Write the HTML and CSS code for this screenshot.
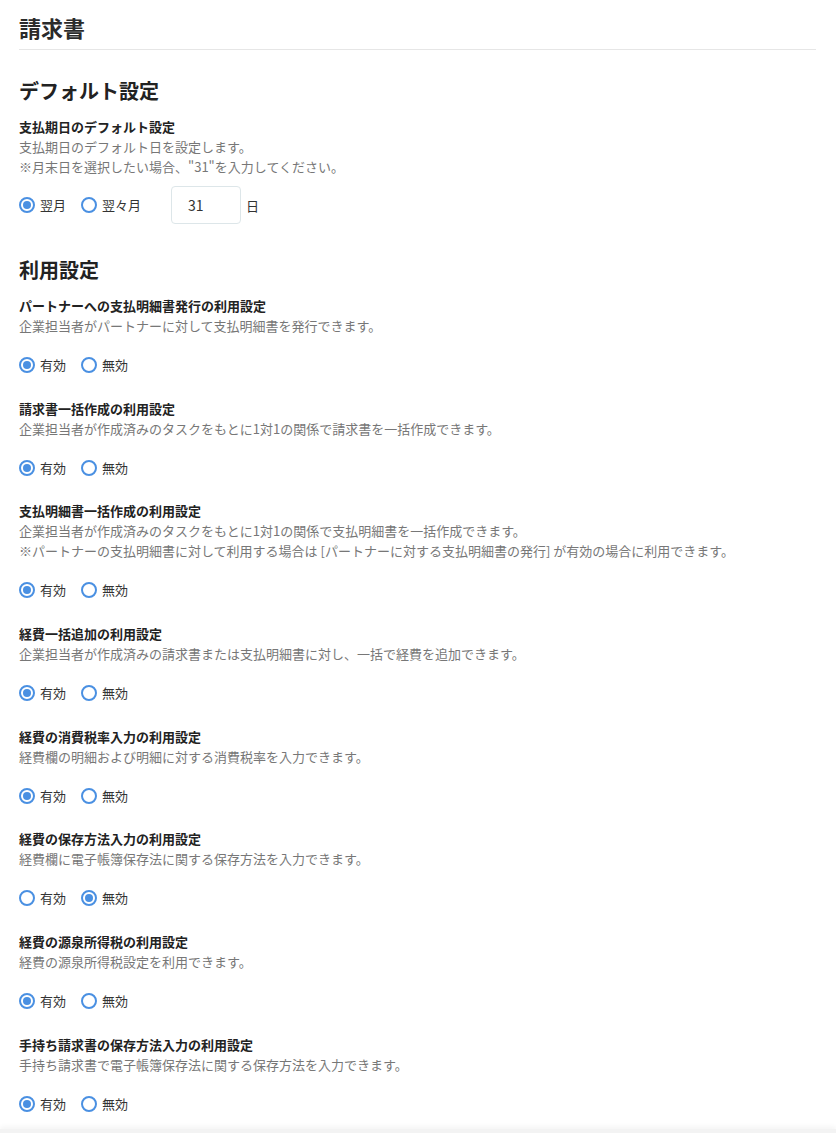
FILE: index.html
```html
<!DOCTYPE html>
<html lang="ja">
<head>
    <meta charset="UTF-8">
    <meta name="viewport" content="width=device-width, initial-scale=1.0">
    <title>請求書</title>
    <link rel="stylesheet" href="styles.css">
</head>
<body>
    <div class="page">
        <h1 class="page-title">請求書</h1>

        <section class="section">
            <h2 class="section-title">デフォルト設定</h2>
            <div class="setting">
                <div class="setting-title">支払期日のデフォルト設定</div>
                <p class="setting-desc">支払期日のデフォルト日を設定します。<br>※月末日を選択したい場合、"31"を入力してください。</p>
                <div class="radio-row radio-row-field">
                    <label class="radio"><span class="radio-mark checked"></span>翌月</label>
                    <label class="radio"><span class="radio-mark"></span>翌々月</label>
                    <div class="day-field">
                        <input class="day-input" type="text" value="31">
                        <span class="day-unit">日</span>
                    </div>
                </div>
            </div>
        </section>

        <section class="section">
            <h2 class="section-title">利用設定</h2>

            <div class="setting">
                <div class="setting-title">パートナーへの支払明細書発行の利用設定</div>
                <p class="setting-desc">企業担当者がパートナーに対して支払明細書を発行できます。</p>
                <div class="radio-row">
                    <label class="radio"><span class="radio-mark checked"></span>有効</label>
                    <label class="radio"><span class="radio-mark"></span>無効</label>
                </div>
            </div>

            <div class="setting">
                <div class="setting-title">請求書一括作成の利用設定</div>
                <p class="setting-desc">企業担当者が作成済みのタスクをもとに1対1の関係で請求書を一括作成できます。</p>
                <div class="radio-row">
                    <label class="radio"><span class="radio-mark checked"></span>有効</label>
                    <label class="radio"><span class="radio-mark"></span>無効</label>
                </div>
            </div>

            <div class="setting">
                <div class="setting-title">支払明細書一括作成の利用設定</div>
                <p class="setting-desc">企業担当者が作成済みのタスクをもとに1対1の関係で支払明細書を一括作成できます。<br>※パートナーの支払明細書に対して利用する場合は [パートナーに対する支払明細書の発行] が有効の場合に利用できます。</p>
                <div class="radio-row">
                    <label class="radio"><span class="radio-mark checked"></span>有効</label>
                    <label class="radio"><span class="radio-mark"></span>無効</label>
                </div>
            </div>

            <div class="setting">
                <div class="setting-title">経費一括追加の利用設定</div>
                <p class="setting-desc">企業担当者が作成済みの請求書または支払明細書に対し、一括で経費を追加できます。</p>
                <div class="radio-row">
                    <label class="radio"><span class="radio-mark checked"></span>有効</label>
                    <label class="radio"><span class="radio-mark"></span>無効</label>
                </div>
            </div>

            <div class="setting">
                <div class="setting-title">経費の消費税率入力の利用設定</div>
                <p class="setting-desc">経費欄の明細および明細に対する消費税率を入力できます。</p>
                <div class="radio-row">
                    <label class="radio"><span class="radio-mark checked"></span>有効</label>
                    <label class="radio"><span class="radio-mark"></span>無効</label>
                </div>
            </div>

            <div class="setting">
                <div class="setting-title">経費の保存方法入力の利用設定</div>
                <p class="setting-desc">経費欄に電子帳簿保存法に関する保存方法を入力できます。</p>
                <div class="radio-row">
                    <label class="radio"><span class="radio-mark"></span>有効</label>
                    <label class="radio"><span class="radio-mark checked"></span>無効</label>
                </div>
            </div>

            <div class="setting">
                <div class="setting-title">経費の源泉所得税の利用設定</div>
                <p class="setting-desc">経費の源泉所得税設定を利用できます。</p>
                <div class="radio-row">
                    <label class="radio"><span class="radio-mark checked"></span>有効</label>
                    <label class="radio"><span class="radio-mark"></span>無効</label>
                </div>
            </div>

            <div class="setting">
                <div class="setting-title">手持ち請求書の保存方法入力の利用設定</div>
                <p class="setting-desc">手持ち請求書で電子帳簿保存法に関する保存方法を入力できます。</p>
                <div class="radio-row">
                    <label class="radio"><span class="radio-mark checked"></span>有効</label>
                    <label class="radio"><span class="radio-mark"></span>無効</label>
                </div>
            </div>
        </section>
    </div>

    <div class="footer-bar"></div>
</body>
</html>
```

FILE: styles.css
```css
:root {
    --text-color: #222222;
    --sub-text-color: #777777;
    --border-color: #e6e6e6;
    --input-border: #dde6e9;
    --accent-color: #4a90e2;
}

* {
    margin: 0;
    padding: 0;
    box-sizing: border-box;
}

body {
    font-family: "Noto Sans CJK JP", "Noto Sans", sans-serif;
    background-color: #ffffff;
    color: var(--text-color);
}

.page {
    padding: 11px 20px 40px 19px;
}

.page-title {
    font-size: 22px;
    line-height: 32px;
    font-weight: 700;
    color: #2b2b2b;
    padding-bottom: 6px;
    border-bottom: 1px solid var(--border-color);
}

.section {
    margin-top: 27px;
}

.section + .section {
    margin-top: 32px;
}

.section-title {
    font-size: 20px;
    line-height: 28px;
    font-weight: 700;
    color: var(--text-color);
    margin-bottom: 12px;
}

.setting + .setting {
    margin-top: 14.7px;
}

.setting-title {
    font-size: 13px;
    line-height: 20px;
    font-weight: 700;
    color: var(--text-color);
}

.setting-desc {
    font-size: 13px;
    line-height: 20px;
    color: var(--sub-text-color);
}

.radio-row {
    display: flex;
    align-items: center;
    min-height: 38px;
    margin-top: 10px;
}

.radio-row-field {
    margin-top: 9px;
}

.radio {
    display: flex;
    align-items: center;
    gap: 5px;
    font-size: 13px;
    line-height: 20px;
    color: #333333;
    margin-right: 15px;
    cursor: pointer;
}

.radio-mark {
    width: 16px;
    height: 16px;
    border: 2px solid var(--accent-color);
    border-radius: 50%;
    display: flex;
    align-items: center;
    justify-content: center;
}

.radio-mark.checked::after {
    content: '';
    width: 8px;
    height: 8px;
    border-radius: 50%;
    background-color: var(--accent-color);
}

.day-field {
    display: flex;
    align-items: center;
    gap: 5px;
    margin-left: 15px;
}

.day-input {
    width: 70px;
    height: 38px;
    padding: 0 16px;
    border: 1px solid var(--input-border);
    border-radius: 4px;
    font-family: inherit;
    font-size: 14px;
    color: #333333;
    outline: none;
}

.day-unit {
    font-size: 13px;
    color: #333333;
}

.footer-bar {
    position: fixed;
    left: 0;
    right: 0;
    bottom: 0;
    height: 4px;
    background-color: #f3f3f3;
    box-shadow: 0 -2px 5px rgba(0, 0, 0, 0.06);
}
```
